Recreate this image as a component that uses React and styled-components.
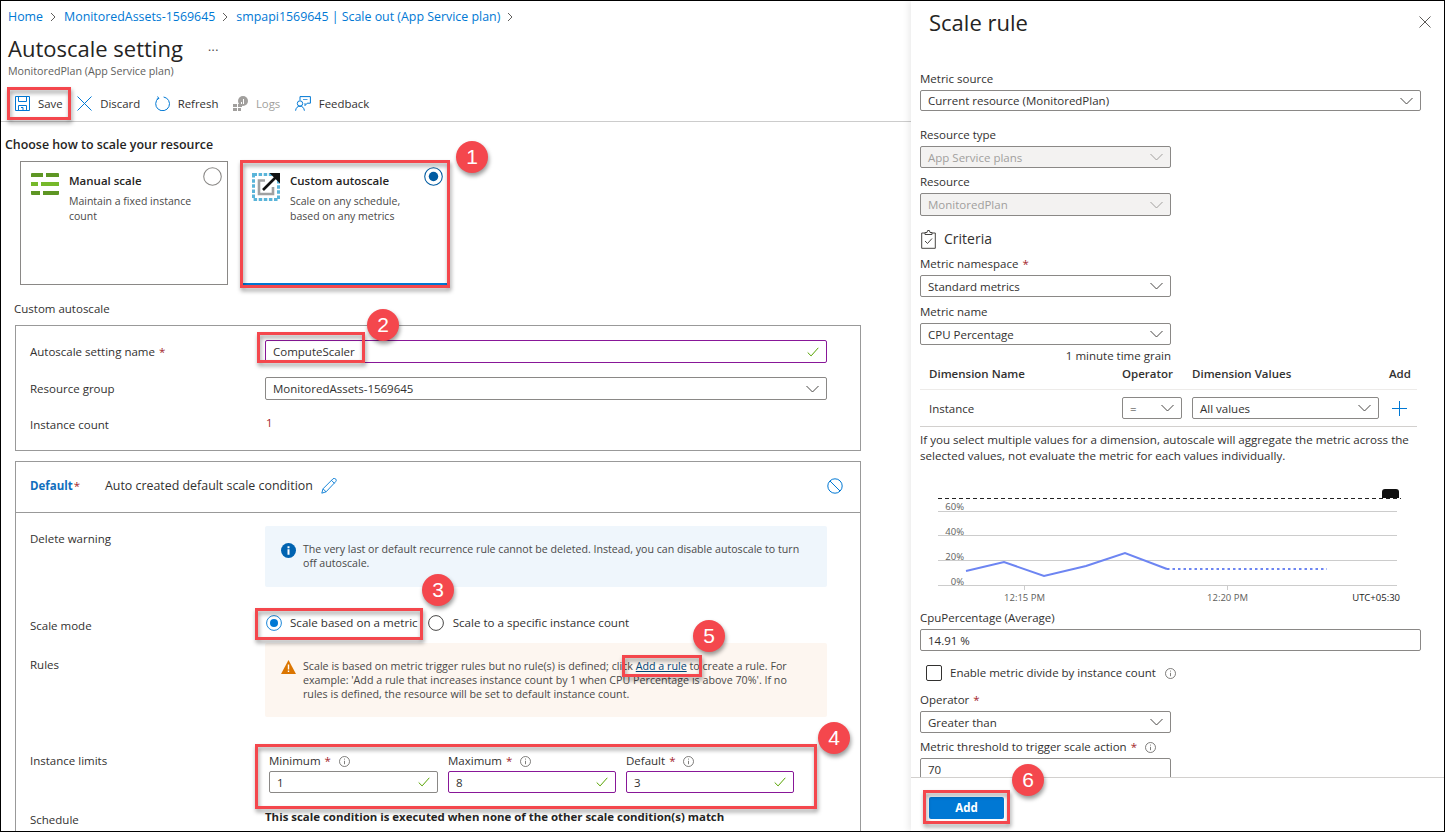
import React from 'react';
import styled, { createGlobalStyle } from 'styled-components';

const GlobalStyle = createGlobalStyle`
  html, body {
    margin: 0;
    padding: 0;
    background: #fff;
  }
  body {
    font-family: "Open Sans", "Noto Sans", "Liberation Sans", sans-serif;
    font-size: 11.5px;
    line-height: 16px;
    color: #323130;
  }
`;

const Frame = styled.div`
  position: relative;
  box-sizing: border-box;
  width: 1445px;
  height: 832px;
  border: 1px solid #000;
  display: flex;
  overflow: hidden;
`;

const Main = styled.main`
  flex: 0 0 910px;
  height: 100%;
  overflow: hidden;
`;

const Breadcrumb = styled.nav`
  display: flex;
  align-items: center;
  height: 32px;
  padding-left: 7px;
  font-size: 12.4px;
  color: #0078d4;
  svg {
    margin: 0 8px 0 7px;
  }
`;

const Title = styled.h1`
  margin: 0;
  padding-left: 7px;
  display: flex;
  align-items: center;
  height: 30px;
  font-size: 22px;
  font-weight: 500;
  color: #252423;
  span {
    margin-left: 25px;
    font-size: 12px;
    font-weight: 400;
    color: #444;
    letter-spacing: 0.5px;
    margin-top: -2px;
  }
`;

const Subtitle = styled.div`
  padding-left: 7px;
  font-size: 10.7px;
  color: #605e5c;
`;

const Toolbar = styled.div`
  box-sizing: border-box;
  display: flex;
  align-items: center;
  gap: 14.5px;
  height: 34px;
  margin-top: 9px;
  padding: 0 0 2px 14px;
  border-bottom: 1px solid #ccc;
  font-size: 11.4px;
`;

const ToolButton = styled.div`
  display: flex;
  align-items: center;
  gap: 8px;
  color: ${(p) => (p.$disabled ? '#a19f9d' : '#323130')};
  svg {
    flex: 0 0 auto;
  }
`;

const Heading = styled.h2`
  margin: 15px 0 0;
  padding-left: 4px;
  font-size: 12.4px;
  line-height: 16px;
  font-weight: 600;
  color: #252423;
`;

const CardRow = styled.div`
  display: flex;
  gap: 13px;
  margin: 8px 0 0 19px;
`;

const Card = styled.div`
  box-sizing: border-box;
  position: relative;
  display: flex;
  width: 208px;
  height: 124px;
  gap: 10px;
  padding: 11px 5px 11px 10px;
  border: 1px solid #8a8886;
  border-bottom: ${(p) => (p.$selected ? '2px solid #0078d4' : '1px solid #8a8886')};
  & > svg {
    flex: 0 0 auto;
  }
`;

const CardBody = styled.div`
  flex: 1;
  min-width: 0;
`;

const CardTitle = styled.div`
  font-size: 11.5px;
  font-weight: 600;
  color: #252423;
  margin-bottom: 5px;
`;

const CardText = styled.div`
  font-size: 10.5px;
  line-height: 15px;
  color: #4a4948;
  width: 130px;
`;

const CardRadio = styled.div`
  flex: 0 0 auto;
  margin-top: -6px;
`;

const SectionLabel = styled.div`
  margin: 16px 0 0 13px;
`;

const Box = styled.section`
  box-sizing: border-box;
  width: 846px;
  margin: ${(p) => p.$top}px 0 0 14px;
  height: ${(p) => p.$height}px;
  padding: ${(p) => p.$pad}px 14px 0;
  border: 1px solid #999;
`;

const Row = styled.div`
  display: grid;
  grid-template-columns: 235px 562px;
  margin-top: ${(p) => p.$top || 0}px;
`;

const RowLabel = styled.div`
  padding-top: ${(p) => p.$pad || 0}px;
  color: #323130;
`;

const InputBox = styled.div`
  box-sizing: border-box;
  display: flex;
  align-items: center;
  justify-content: space-between;
  width: ${(p) => p.$width || '100%'};
  height: ${(p) => p.$height || 22}px;
  padding: 1px 7px 0;
  flex: 0 0 auto;
  border: 1px solid ${(p) => (p.$dirty ? '#881798' : '#8a8886')};
  border-radius: 2px;
  background: ${(p) => (p.$disabled ? '#f3f2f1' : '#fff')};
  color: ${(p) => (p.$disabled ? '#a19f9d' : '#323130')};
  svg {
    flex: 0 0 auto;
    margin-top: -1px;
  }
`;

const InstanceValue = styled.div`
  color: #a4262c;
  padding: 0 0 0 1px;
  margin-top: -2px;
`;

const Required = styled.span`
  color: #a4262c;
  margin-left: 4px;
`;

const ConditionHeader = styled.div`
  box-sizing: border-box;
  display: flex;
  align-items: center;
  height: 51px;
  margin: 0 -14px;
  padding: 0 17px 2px 14px;
  border-bottom: 1px solid #999;
`;

const ConditionName = styled.strong`
  font-weight: 700;
  color: #106ebe;
  width: 75px;
  span {
    color: #a4262c;
    font-weight: 400;
    margin-left: 1px;
  }
`;

const ConditionText = styled.span`
  margin-right: 8px;
  font-size: 12.4px;
`;

const HeaderSpacer = styled.span`
  flex: 1;
`;

const Notice = styled.div`
  box-sizing: border-box;
  display: flex;
  gap: 7px;
  height: ${(p) => p.$height}px;
  padding: ${(p) => p.$pad}px 20px 0 16px;
  border-radius: 2px;
  background: ${(p) => (p.$warn ? '#fdf6f0' : '#eff6fc')};
  font-size: ${(p) => (p.$warn ? 10.7 : 10.63)}px;
  line-height: 14px;
  color: #4a4948;
  svg {
    flex: 0 0 auto;
    margin-top: 1px;
  }
`;

const NoticeLink = styled.span`
  color: #004578;
  text-decoration: underline;
`;

const RadioGroup = styled.div`
  display: flex;
  align-items: center;
  height: 22px;
  padding-left: 1px;
  font-size: 11.6px;
`;

const RadioOption = styled.div`
  display: flex;
  align-items: center;
  gap: 8px;
  margin-right: 10px;
  & + & {
    gap: 9px;
  }
`;

const Limits = styled.div`
  display: grid;
  grid-template-columns: 169px 168px 168px;
  gap: 10px;
  padding-left: 4px;
`;

const LimitLabel = styled.div`
  display: flex;
  align-items: center;
  margin-bottom: 2px;
  svg {
    margin-left: 8px;
  }
`;

const ScheduleText = styled.div`
  font-weight: 700;
  font-size: 11.45px;
  color: #252423;
  white-space: nowrap;
`;

const Panel = styled.aside`
  position: relative;
  z-index: 1;
  flex: 1;
  height: 100%;
  display: flex;
  flex-direction: column;
  background: #fff;
  box-shadow: -3px 0 6px rgba(0, 0, 0, 0.07);
`;

const PanelHead = styled.header`
  display: flex;
  align-items: center;
  justify-content: space-between;
  flex: 0 0 auto;
  height: 41px;
  padding: 0 13px 0 18px;
`;

const PanelTitle = styled.h2`
  margin: 0;
  font-size: 22px;
  font-weight: 500;
  color: #252423;
`;

const PanelBody = styled.div`
  flex: 1;
  overflow: hidden;
  padding: 29px 0 0 9px;
`;

const Field = styled.div`
  margin-top: ${(p) => p.$top || 0}px;
  width: ${(p) => p.$width}px;
`;

const FieldLabel = styled.div`
  display: flex;
  align-items: center;
  margin-bottom: 3px;
  svg {
    margin-left: 8px;
  }
`;

const CriteriaRow = styled.div`
  display: flex;
  align-items: center;
  gap: 8px;
  height: 20px;
  margin: 13px 0 7px 1px;
  font-size: 14px;
`;

const Grain = styled.div`
  width: 251px;
  margin-top: 3px;
  text-align: right;
`;

const DimHeader = styled.div`
  box-sizing: border-box;
  display: grid;
  grid-template-columns: 202px 70px 197px 28px;
  width: 497px;
  height: 24px;
  margin-top: 2px;
  padding-top: 0;
  border-bottom: 1px solid #edebe9;
  font-weight: 600;
  span:first-child {
    padding-left: 9px;
  }
`;

const DimRow = styled.div`
  box-sizing: border-box;
  display: grid;
  grid-template-columns: 202px 70px 197px 28px;
  align-items: center;
  width: 497px;
  height: 37px;
  border-bottom: 1px solid #d2d0ce;
  & > span:first-child {
    padding: 1px 0 0 9px;
  }
`;

const PlusCell = styled.div`
  padding-left: 3px;
  display: flex;
`;

const Note = styled.p`
  width: 500px;
  margin: 5px 0 0;
  font-size: 11.6px;
`;

const ChartSvg = styled.svg`
  display: block;
  width: 490px;
  height: 120px;
  margin: 21px 0 0 10px;
  text {
    font-family: "Open Sans", sans-serif;
    font-size: 9.5px;
    fill: #605e5c;
  }
  .zone {
    fill: #222;
  }
`;

const CheckRow = styled.div`
  display: flex;
  align-items: center;
  margin: 14px 0 0 6px;
  height: 16px;
  svg {
    margin-left: 9px;
  }
`;

const CheckBox = styled.div`
  box-sizing: border-box;
  width: 16px;
  height: 16px;
  margin-right: 8px;
  border: 1px solid #323130;
  border-radius: 2px;
`;

const PanelFooter = styled.footer`
  box-sizing: border-box;
  flex: 0 0 auto;
  height: 54px;
  padding: 19px 0 0 18px;
  border-top: 1px solid #d2d0ce;
  background: #fff;
`;

const PrimaryButton = styled.div`
  display: flex;
  align-items: center;
  justify-content: center;
  width: 75px;
  height: 22px;
  border-radius: 2px;
  background: #0078d4;
  color: #fff;
  font-weight: 700;
  font-size: 11.5px;
`;

const Highlight = styled.div`
  position: absolute;
  z-index: 5;
  box-sizing: border-box;
  left: ${(p) => p.$x - 1}px;
  top: ${(p) => p.$y - 1}px;
  width: ${(p) => p.$w}px;
  height: ${(p) => p.$h}px;
  border: 3px solid #f4474d;
  filter: drop-shadow(1px 3px 2px rgba(0, 0, 0, 0.4));
`;

const StepBadge = styled.div`
  position: absolute;
  z-index: 6;
  left: ${(p) => p.$x - 16 - 1}px;
  top: ${(p) => p.$y - 16 - 1}px;
  width: 32px;
  height: 32px;
  display: flex;
  align-items: center;
  justify-content: center;
  border-radius: 50%;
  background: #f4474d;
  color: #fff;
  font-family: "Liberation Sans", Arial, sans-serif;
  font-size: 21px;
  box-shadow: 1px 3px 4px rgba(0, 0, 0, 0.4);
`;

const Crumb = () => (
  <svg width="6" height="10" viewBox="0 0 6 10" fill="none" stroke="#605e5c">
    <path d="M1 1l4 4-4 4" />
  </svg>
);

const Chevron = ({ color = '#484644' }) => (
  <svg width="13" height="8" viewBox="0 0 13 8" fill="none" stroke={color}>
    <path d="M.5 1l6 6 6-6" />
  </svg>
);

const Check = () => (
  <svg width="12" height="10" viewBox="0 0 12 10" fill="none" stroke="#57a300">
    <path d="M.7 5.5l3.4 3.4L11.3.8" />
  </svg>
);

const Info = () => (
  <svg width="11" height="11" viewBox="0 0 11 11" fill="none" stroke="#605e5c" strokeWidth=".8">
    <circle cx="5.5" cy="5.5" r="5" />
    <path d="M5.5 4.8v3.4M5.5 2.6v1" />
  </svg>
);

const Radio = ({ checked, color = '#0078d4', ring = '#323130', size = 16 }) => (
  <svg width={size} height={size} viewBox="0 0 16 16" fill="none">
    <circle cx="8" cy="8" r="7.4" stroke={checked ? color : ring} strokeWidth=".9" />
    {checked && <circle cx="8" cy="8" r="4" fill={color} />}
  </svg>
);

const SaveIcon = () => (
  <svg width="15" height="15" viewBox="0 0 15 15" fill="none" stroke="#0078d4">
    <path d="M.5.5h14v14H.5zM3.5.5v5h8v-5M3.5 14.5v-5h8v5M6 11.5h2v3" />
  </svg>
);

const DiscardIcon = () => (
  <svg width="15" height="15" viewBox="0 0 15 15" fill="none" stroke="#0078d4">
    <path d="M.5.5l14 14M14.5.5l-14 14" />
  </svg>
);

const RefreshIcon = () => (
  <svg width="15" height="15" viewBox="0 0 15 15" fill="none" stroke="#0078d4">
    <path d="M8.6 1a6.9 6.9 0 1 1-5 1.2M2.6.5l1.3 2-2.2.7" />
  </svg>
);

const LogsIcon = () => (
  <svg width="15" height="15" viewBox="0 0 15 15" fill="#a19f9d">
    <path d="M0 8h4v3H0zM5 8h4v3H5zM0 12h4v3H0zM5 12h3v3H5z" />
    <circle cx="10" cy="5" r="5" />
    <path d="M8 6h1v2H8zM10 3h1v5h-1z" fill="#fff" />
  </svg>
);

const FeedbackIcon = () => (
  <svg width="16" height="15" viewBox="0 0 16 15" fill="none" stroke="#0078d4">
    <path d="M5 4.2V.6h10.4v6.6h-3.2L10 9.6V7.2" />
    <circle cx="5" cy="7.5" r="2.7" />
    <path d="M.6 14.7c.3-3 2-4.5 4.4-4.5s4 1.5 4.4 4.5" />
    <path d="M8 3.5h4.5" strokeWidth=".7" />
  </svg>
);

const ManualIcon = () => (
  <svg width="28" height="22" viewBox="0 0 28 22">
    <path d="M0 1a1 1 0 0 1 1-1h11v4H0zM15 0h12a1 1 0 0 1 1 1v3H15z" fill="#5e9624" />
    <path d="M0 9h7v4H0zM10 9h18v4H10z" fill="#76b82a" />
    <path d="M0 18h9v4H1a1 1 0 0 1-1-1zM12 18h16v3a1 1 0 0 1-1 1H12z" fill="#5e9624" />
  </svg>
);

const CustomIcon = () => (
  <svg width="28" height="28" viewBox="0 0 28 28" fill="none">
    <path d="M1.5 1.5h25v25h-25z" stroke="#59b4d9" strokeWidth="3" strokeDasharray="3.5 1.6" />
    <path d="M13 7.5H7v13.5h14v-7" stroke="#a0a1a2" strokeWidth="2.6" />
    <path d="M11 17L25 3" stroke="#111" strokeWidth="2.6" />
    <path d="M17.5 0H28v10.5z" fill="#111" />
  </svg>
);

const Pencil = () => (
  <svg width="16" height="16" viewBox="0 0 16 16" fill="none" stroke="#0078d4" strokeWidth=".9">
    <path d="M.8 15.2l1.2-4.4L11.8 1a1.8 1.8 0 0 1 2.9 2.6l-9.6 10.2zM2 10.8l3.1 3M10.5 2.4l3 3" />
  </svg>
);

const DisableIcon = () => (
  <svg width="16" height="16" viewBox="0 0 16 16" fill="none" stroke="#0078d4">
    <circle cx="8" cy="8" r="7.2" />
    <path d="M3 3l10 10" />
  </svg>
);

const InfoSolid = () => (
  <svg width="15" height="15" viewBox="0 0 15 15">
    <circle cx="7.5" cy="7.5" r="7.5" fill="#0063b1" />
    <path d="M6.5 6.2h2v5.6h-2zM6.5 3.2h2v2h-2z" fill="#fff" />
  </svg>
);

const WarnIcon = () => (
  <svg width="15" height="14" viewBox="0 0 15 14">
    <path d="M7.5 0L15 14H0z" fill="#db7500" />
    <path d="M6.8 4.5h1.4v5H6.8zM6.8 10.5h1.4V12H6.8z" fill="#fff" />
  </svg>
);

const CloseIcon = () => (
  <svg width="12" height="12" viewBox="0 0 12 12" fill="none" stroke="#484644" strokeWidth=".9">
    <path d="M.5.5l11 11M11.5.5l-11 11" />
  </svg>
);

const ClipboardIcon = () => (
  <svg width="15" height="19" viewBox="0 0 15 19" fill="none" stroke="#484644">
    <path d="M4 3H.7v15.3h13.6V3H11M4 4.5V2.5h2l.6-2h1.8l.6 2h2v2zM4 11l2.5 2.5L11 8.5" />
  </svg>
);

const Plus = () => (
  <svg width="15" height="15" viewBox="0 0 15 15" fill="none" stroke="#0078d4">
    <path d="M7.5 0v15M0 7.5h15" />
  </svg>
);

const Select = ({ children, width, disabled, height }) => (
  <InputBox $width={width} $disabled={disabled} $height={height}>
    <span>{children}</span>
    <Chevron color={disabled ? '#a19f9d' : '#484644'} />
  </InputBox>
);

const Chart = () => (
  <ChartSvg viewBox="0 0 490 120">
    <path d="M8 13.5H471" stroke="#222" strokeDasharray="4 3" fill="none" />
    <path d="M452 13v-6q0-3 3-3h11q3 0 3 3v6z" fill="#111" />
    {[26, 50, 75, 100].map((y) => (
      <path key={y} d={`M8 ${y}.5H467`} stroke="#ccc" fill="none" />
    ))}
    <text x="34" y="25" textAnchor="end">60%</text>
    <text x="34" y="50" textAnchor="end">40%</text>
    <text x="34" y="75" textAnchor="end">20%</text>
    <text x="34" y="100" textAnchor="end">0%</text>
    <path d="M36 86L74 77L114 91L156 81L195 68L237 84" stroke="#6d85f2" strokeWidth="2" fill="none" />
    <path d="M237 84H397" stroke="#6d85f2" strokeWidth="2" strokeDasharray="2.5 3" fill="none" />
    <path d="M94.5 100v5M297.5 100v5" stroke="#ccc" fill="none" />
    <text x="94.5" y="116" textAnchor="middle">12:15 PM</text>
    <text x="297.5" y="116" textAnchor="middle">12:20 PM</text>
    <text className="zone" x="470" y="116" textAnchor="end">UTC+05:30</text>
  </ChartSvg>
);

const highlights = [
  { x: 7, y: 87, w: 64, h: 33 },
  { x: 240, y: 160, w: 210, h: 128 },
  { x: 257, y: 332, w: 108, h: 31 },
  { x: 255, y: 608, w: 168, h: 32 },
  { x: 255, y: 744, w: 562, h: 65 },
  { x: 622, y: 655, w: 80, h: 22 },
  { x: 923, y: 790, w: 87, h: 34 },
];

const badges = [
  { n: 1, x: 472, y: 157 },
  { n: 2, x: 383, y: 325 },
  { n: 3, x: 438, y: 590 },
  { n: 4, x: 834, y: 738 },
  { n: 5, x: 709, y: 636 },
  { n: 6, x: 1028, y: 780 },
];

export default function App() {
  return (
    <>
      <GlobalStyle />
      <Frame>
        <Main>
          <Breadcrumb>
            Home<Crumb />MonitoredAssets-1569645<Crumb />smpapi1569645 | Scale out (App Service plan)<Crumb />
          </Breadcrumb>
          <Title>
            Autoscale setting<span>...</span>
          </Title>
          <Subtitle>MonitoredPlan (App Service plan)</Subtitle>
          <Toolbar>
            <ToolButton><SaveIcon />Save</ToolButton>
            <ToolButton><DiscardIcon />Discard</ToolButton>
            <ToolButton><RefreshIcon />Refresh</ToolButton>
            <ToolButton $disabled><LogsIcon />Logs</ToolButton>
            <ToolButton><FeedbackIcon />Feedback</ToolButton>
          </Toolbar>
          <Heading>Choose how to scale your resource</Heading>
          <CardRow>
            <Card>
              <ManualIcon />
              <CardBody>
                <CardTitle>Manual scale</CardTitle>
                <CardText>Maintain a fixed instance count</CardText>
              </CardBody>
              <CardRadio><Radio size={19} ring="#8a8886" /></CardRadio>
            </Card>
            <Card $selected>
              <CustomIcon />
              <CardBody>
                <CardTitle>Custom autoscale</CardTitle>
                <CardText>Scale on any schedule, based on any metrics</CardText>
              </CardBody>
              <CardRadio><Radio checked size={19} color="#005ba1" /></CardRadio>
            </Card>
          </CardRow>
          <SectionLabel>Custom autoscale</SectionLabel>
          <Box $top={8} $height={126} $pad={14}>
            <Row>
              <RowLabel $pad={4}>Autoscale setting name<Required>*</Required></RowLabel>
              <InputBox $dirty $height={23}>ComputeScaler<Check /></InputBox>
            </Row>
            <Row $top={14}>
              <RowLabel $pad={4}>Resource group</RowLabel>
              <Select height={23}>MonitoredAssets-1569645</Select>
            </Row>
            <Row $top={17}>
              <RowLabel>Instance count</RowLabel>
              <InstanceValue>1</InstanceValue>
            </Row>
          </Box>
          <Box $top={10} $height={400} $pad={0}>
            <ConditionHeader>
              <ConditionName>Default<span>*</span></ConditionName>
              <ConditionText>Auto created default scale condition</ConditionText>
              <Pencil />
              <HeaderSpacer />
              <DisableIcon />
            </ConditionHeader>
            <Row $top={13}>
              <RowLabel $pad={5}>Delete warning</RowLabel>
              <Notice $height={61} $pad={16}>
                <InfoSolid />
                <div>The very last or default recurrence rule cannot be deleted. Instead, you can disable autoscale to turn off autoscale.</div>
              </Notice>
            </Row>
            <Row $top={25}>
              <RowLabel $pad={6}>Scale mode</RowLabel>
              <RadioGroup>
                <RadioOption><Radio checked /> Scale based on a metric</RadioOption>
                <RadioOption><Radio /> Scale to a specific instance count</RadioOption>
              </RadioGroup>
            </Row>
            <Row $top={9}>
              <RowLabel $pad={14}>Rules</RowLabel>
              <Notice $warn $height={74} $pad={16}>
                <WarnIcon />
                <div>
                  <div>Scale is based on metric trigger rules but no rule(s) is defined; click <NoticeLink>Add a rule</NoticeLink> to create a rule. For</div>
                  <div>example: 'Add a rule that increases instance count by 1 when CPU Percentage is above 70%'. If no</div>
                  <div>rules is defined, the resource will be set to default instance count.</div>
                </div>
              </Notice>
            </Row>
            <Row $top={36}>
              <RowLabel>Instance limits</RowLabel>
              <Limits>
                <div>
                  <LimitLabel>Minimum<Required>*</Required><Info /></LimitLabel>
                  <InputBox>1<Check /></InputBox>
                </div>
                <div>
                  <LimitLabel>Maximum<Required>*</Required><Info /></LimitLabel>
                  <InputBox $dirty>8<Check /></InputBox>
                </div>
                <div>
                  <LimitLabel>Default<Required>*</Required><Info /></LimitLabel>
                  <InputBox $dirty>3<Check /></InputBox>
                </div>
              </Limits>
            </Row>
            <Row $top={16}>
              <RowLabel $pad={3}>Schedule</RowLabel>
              <ScheduleText>This scale condition is executed when none of the other scale condition(s) match</ScheduleText>
            </Row>
          </Box>
        </Main>
        <Panel>
          <PanelHead>
            <PanelTitle>Scale rule</PanelTitle>
            <CloseIcon />
          </PanelHead>
          <PanelBody>
            <Field $width={501}>
              <FieldLabel>Metric source</FieldLabel>
              <Select height={21}>Current resource (MonitoredPlan)</Select>
            </Field>
            <Field $width={251} $top={16}>
              <FieldLabel>Resource type</FieldLabel>
              <Select disabled>App Service plans</Select>
            </Field>
            <Field $width={251} $top={6}>
              <FieldLabel>Resource</FieldLabel>
              <Select disabled height={23}>MonitoredPlan</Select>
            </Field>
            <CriteriaRow><ClipboardIcon />Criteria</CriteriaRow>
            <Field $width={251}>
              <FieldLabel>Metric namespace<Required>*</Required></FieldLabel>
              <Select>Standard metrics</Select>
            </Field>
            <Field $width={251} $top={7}>
              <FieldLabel>Metric name</FieldLabel>
              <Select>CPU Percentage</Select>
            </Field>
            <Grain>1 minute time grain</Grain>
            <DimHeader>
              <span>Dimension Name</span>
              <span>Operator</span>
              <span>Dimension Values</span>
              <span>Add</span>
            </DimHeader>
            <DimRow>
              <span>Instance</span>
              <Select width="60px">=</Select>
              <Select width="187px">All values</Select>
              <PlusCell><Plus /></PlusCell>
            </DimRow>
            <Note>If you select multiple values for a dimension, autoscale will aggregate the metric across the selected values, not evaluate the metric for each values individually.</Note>
            <Chart />
            <Field $width={501} $top={5}>
              <FieldLabel>CpuPercentage (Average)</FieldLabel>
              <InputBox>14.91 %</InputBox>
            </Field>
            <CheckRow><CheckBox />Enable metric divide by instance count<Info /></CheckRow>
            <Field $width={251} $top={11}>
              <FieldLabel>Operator<Required>*</Required></FieldLabel>
              <Select>Greater than</Select>
            </Field>
            <Field $width={251} $top={6}>
              <FieldLabel>Metric threshold to trigger scale action<Required>*</Required><Info /></FieldLabel>
              <InputBox>70</InputBox>
            </Field>
          </PanelBody>
          <PanelFooter>
            <PrimaryButton>Add</PrimaryButton>
          </PanelFooter>
        </Panel>
        {highlights.map((h) => (
          <Highlight key={`${h.x}-${h.y}`} $x={h.x} $y={h.y} $w={h.w} $h={h.h} />
        ))}
        {badges.map((b) => (
          <StepBadge key={b.n} $x={b.x} $y={b.y}>{b.n}</StepBadge>
        ))}
      </Frame>
    </>
  );
}
